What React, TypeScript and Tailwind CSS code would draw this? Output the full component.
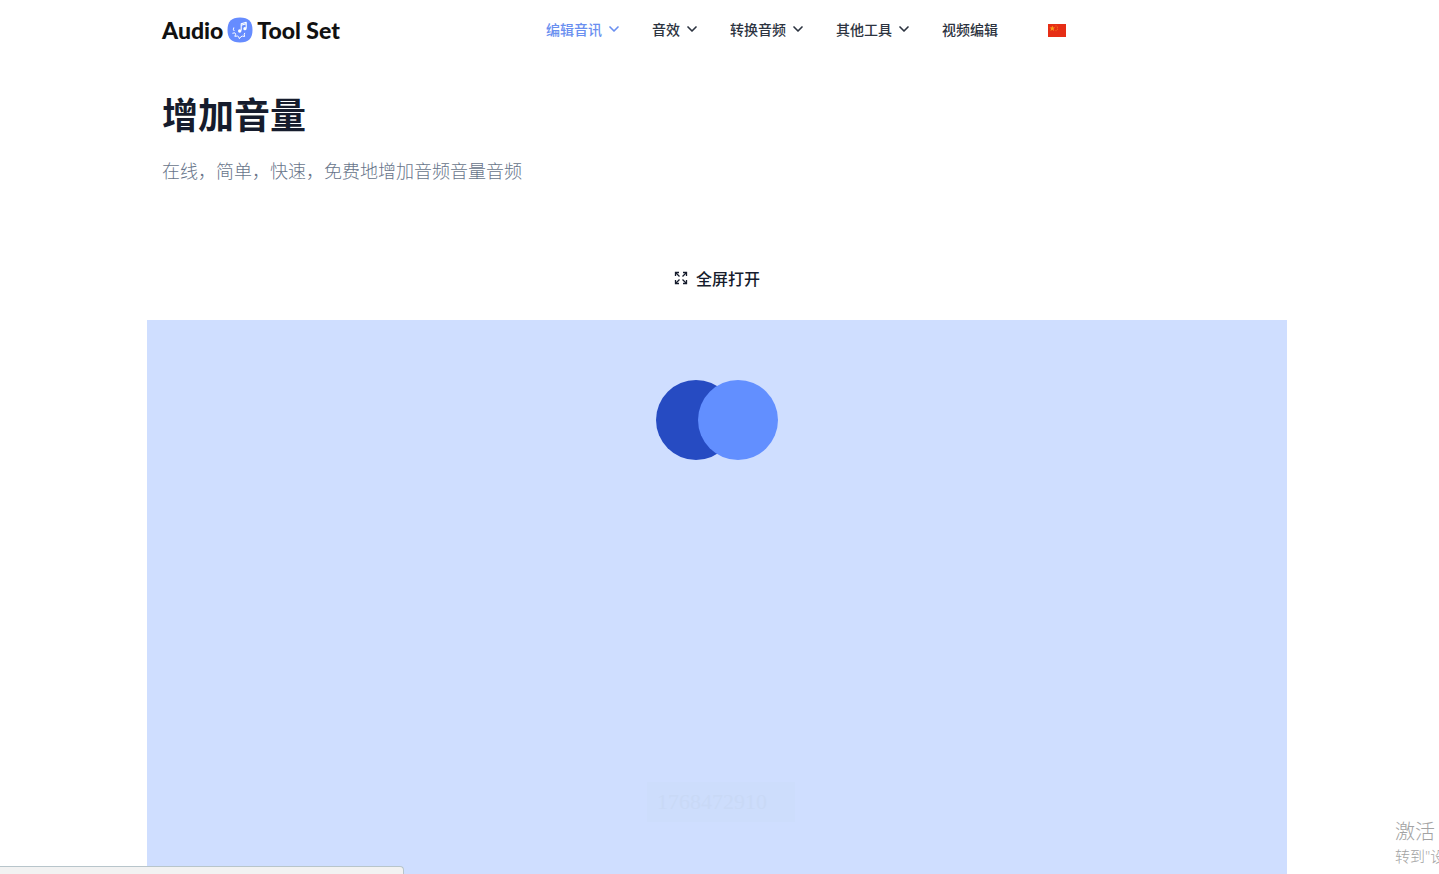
import { ChevronDown } from "lucide-react";
import { clsx } from "clsx";

const links = [
  { name: "编辑音讯", path: "#edit", menu: true, active: true },
  { name: "音效", path: "#effects", menu: true },
  { name: "转换音频", path: "#convert", menu: true },
  { name: "其他工具", path: "#tools", menu: true },
  { name: "视频编辑", path: "#video" },
];

function LogoMark() {
  return (
    <svg viewBox="0 0 26 26" className="w-6.5 h-6.5" aria-hidden="true">
      <path
        d="M13 .5C21.500 .5 25.500 4.500 25.500 13S21.500 25.500 13 25.500 .5 21.500 .5 13 4.500 .5 13 .5Z"
        fill="#668cff"
      />
      <g fill="none" stroke="#fff" strokeLinejoin="round">
        <path d="M14.200 13.500V6.800l5-1.400v6" strokeWidth="1.100" />
        <path d="M14.200 8.200l5-1.400" strokeWidth="1.100" />
        <path
          d="M6.800 10.500l-.4 2.300 1 1.200M5.400 16.300l2.400-.5.900 1.500-.9 2 2.600-.3 1.200.7.8 2 1.500-2 1.500-.6 2.200.4-.4-2.300.7-1.300"
          strokeWidth="1"
        />
      </g>
      <circle cx="12.700" cy="14" r="1.700" fill="#fff" />
      <circle cx="17.900" cy="11.700" r="1.600" fill="#fff" />
    </svg>
  );
}

function ChinaFlag() {
  return (
    <svg viewBox="0 0 18 13" className="w-4.5 h-3.25" aria-hidden="true">
      <path fill="#e62e16" d="M0 0h18v13H0z" />
      <path
        fill="#f9a01b"
        d="M4.300 1.500l.8 2h2.100L5.500 4.800l.6 2.100-1.800-1.200-1.800 1.200.6-2.100-1.700-1.300h2.100z"
      />
      <g fill="#f0751c">
        <circle cx="8" cy="1.800" r=".6" />
        <circle cx="9.400" cy="3.200" r=".6" />
        <circle cx="9.400" cy="5.200" r=".6" />
        <circle cx="8" cy="6.600" r=".6" />
      </g>
    </svg>
  );
}

function ExpandIcon() {
  return (
    <svg
      viewBox="0 0 14 14"
      className="w-3.5 h-3.5"
      fill="none"
      stroke="currentColor"
      strokeWidth="1.300"
      aria-hidden="true"
    >
      <path d="M1.500 5V1.500H5M9 1.500h3.500V5M12.500 9v3.500H9M5 12.500H1.500V9" />
      <path d="M1.500 1.500l4 4M12.500 1.500l-4 4M12.500 12.500l-4-4M1.500 12.500l4-4" />
    </svg>
  );
}

function Header() {
  return (
    <header className="flex items-center h-15 px-[15px]">
      <a
        href="#home"
        className="flex items-center gap-1 w-96 text-[23px] leading-7 font-black text-[#111] font-['Lato_Black','Lato',sans-serif]"
      >
        <span>Audio</span>
        <LogoMark />
        <span>Tool Set</span>
      </a>
      <nav className="flex items-center gap-[30px] text-sm font-medium">
        {links.map((link) => (
          <a
            key={link.path}
            href={link.path}
            className={clsx(
              "flex items-center gap-1 pb-0.5 whitespace-nowrap",
              link.active ? "text-[#6a8ff0]" : "text-[#2c3340]"
            )}
          >
            {link.name}
            {link.menu && <ChevronDown className="w-4 h-4" strokeWidth={2.5} />}
          </a>
        ))}
      </nav>
      <button type="button" aria-label="中文" className="ml-[50px]">
        <ChinaFlag />
      </button>
    </header>
  );
}

export default function App() {
  return (
    <div className="relative flex flex-col min-h-screen overflow-hidden bg-white pr-[5px] font-['Noto_Sans_CJK_SC',sans-serif]">
      <div className="flex flex-col flex-1 w-full max-w-[1140px] mx-auto">
        <Header />

        <main className="flex flex-col flex-1">
          <div className="px-[15px] pt-[27px]">
            <h1 className="text-4xl leading-13 font-bold text-[#161c2d]">增加音量</h1>
            <p className="mt-[15px] text-lg leading-8 font-light text-[#68758a]">
              在线，简单，快速，免费地增加音频音量音频
            </p>
          </div>

          <button
            type="button"
            className="flex items-center self-center gap-2 mt-20 mb-[30px] text-base leading-6 font-medium text-[#161c2d]"
          >
            <ExpandIcon />
            全屏打开
          </button>

          <section className="flex flex-col items-center justify-between flex-1 pt-15 pb-13 bg-[#cfdeff]">
            {/* Loader */}
            <div role="status" aria-label="Loading" className="flex">
              <span className="w-20 h-20 rounded-full bg-[#264bc2]" />
              <span className="w-20 h-20 -ml-9.5 rounded-full bg-[#628fff]" />
            </div>
            <p className="w-37 pl-2.5 py-1 ml-2 text-[22px] leading-8 bg-[#cdddfc] text-[#c9d9f6] font-['Liberation_Serif',serif]">
              1768472910
            </p>
          </section>
        </main>
      </div>

      {/* Link status bar */}
      <div className="absolute bottom-0 left-0 w-101 h-2 border-t border-r border-[#b8c5cb] rounded-tr bg-[#f2f2f2]" />

      {/* System notice */}
      <aside className="absolute bottom-2 right-0 w-11 overflow-hidden whitespace-nowrap font-light text-[#a3a3a3] font-['Open_Sans','Noto_Sans_CJK_SC',sans-serif]">
        <p className="text-xl leading-7">激活</p>
        <p className="text-[15px] leading-5">转到"设</p>
      </aside>
    </div>
  );
}
